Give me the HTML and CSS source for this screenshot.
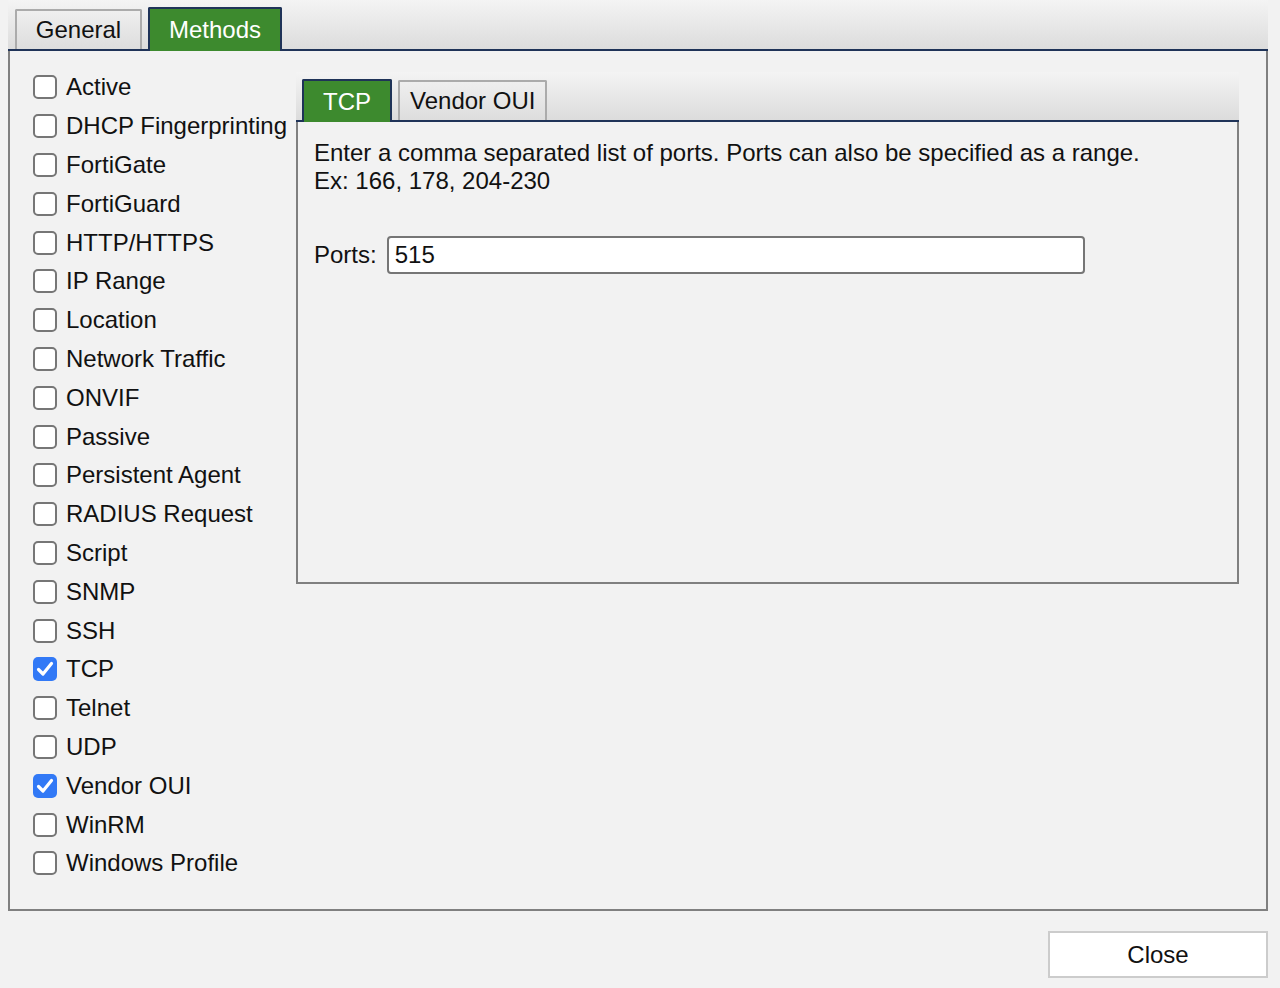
FILE: index.html
```html
<!DOCTYPE html>
<html>
<head>
<meta charset="utf-8">
<link rel="stylesheet" href="styles.css">
</head>
<body>
<div class="dialog">
  <div class="tabbar">
    <div class="tab">General</div>
    <div class="tab active">Methods</div>
  </div>
  <div class="panel">
    <div class="methods">
      <label class="row"><span class="cb"></span>Active</label>
      <label class="row"><span class="cb"></span>DHCP Fingerprinting</label>
      <label class="row"><span class="cb"></span>FortiGate</label>
      <label class="row"><span class="cb"></span>FortiGuard</label>
      <label class="row"><span class="cb"></span>HTTP/HTTPS</label>
      <label class="row"><span class="cb"></span>IP Range</label>
      <label class="row"><span class="cb"></span>Location</label>
      <label class="row"><span class="cb"></span>Network Traffic</label>
      <label class="row"><span class="cb"></span>ONVIF</label>
      <label class="row"><span class="cb"></span>Passive</label>
      <label class="row"><span class="cb"></span>Persistent Agent</label>
      <label class="row"><span class="cb"></span>RADIUS Request</label>
      <label class="row"><span class="cb"></span>Script</label>
      <label class="row"><span class="cb"></span>SNMP</label>
      <label class="row"><span class="cb"></span>SSH</label>
      <label class="row"><span class="cb checked"><svg viewBox="0 0 24 24" width="24" height="24"><path d="M5.5 12.5 L10 17 L18.5 6.5" fill="none" stroke="#fff" stroke-width="3.2" stroke-linecap="round" stroke-linejoin="round"/></svg></span>TCP</label>
      <label class="row"><span class="cb"></span>Telnet</label>
      <label class="row"><span class="cb"></span>UDP</label>
      <label class="row"><span class="cb checked"><svg viewBox="0 0 24 24" width="24" height="24"><path d="M5.5 12.5 L10 17 L18.5 6.5" fill="none" stroke="#fff" stroke-width="3.2" stroke-linecap="round" stroke-linejoin="round"/></svg></span>Vendor OUI</label>
      <label class="row"><span class="cb"></span>WinRM</label>
      <label class="row"><span class="cb"></span>Windows Profile</label>
    </div>
    <div class="detail">
      <div class="tabbar inner">
        <div class="tab active">TCP</div>
        <div class="tab">Vendor OUI</div>
      </div>
      <div class="subpanel">
        <p class="hint">Enter a comma separated list of ports. Ports can also be specified as a range.<br>Ex: 166, 178, 204-230</p>
        <div class="field">
          <span class="label">Ports:</span>
          <div class="input">515</div>
        </div>
      </div>
    </div>
  </div>
  <div class="footer">
    <div class="button">Close</div>
  </div>
</div>
</body>
</html>
```
FILE: styles.css
```css
html, body {
  margin: 0;
  padding: 0;
  background: #f2f2f2;
}
body {
  font-family: "Liberation Sans", Arial, sans-serif;
  font-size: 24px;
  color: #111;
}
.dialog {
  width: 1260px;
  margin-left: 8px;
}
.tabbar {
  display: flex;
  align-items: flex-end;
  gap: 6px;
  height: 49px;
  padding-left: 7px;
  background: linear-gradient(#f4f4f4, #dcdcdc);
  border-bottom: 2px solid #1f3358;
  box-sizing: content-box;
}
.tab {
  height: 38px;
  padding: 0 20px;
  display: flex;
  align-items: center;
  justify-content: center;
  border: 2px solid #ababab;
  border-bottom: none;
  border-radius: 2px 2px 0 0;
  background: linear-gradient(#efefef, #dddddd);
  color: #111;
}
.tab.active {
  height: 42px;
  background: #3d8a2e;
  border-color: #1f3358;
  color: #fff;
  margin-bottom: -2px;
}
.tabbar > .tab:first-child:not(.active) {
  width: 123px;
  padding-left: 0;
  padding-right: 0;
}
.tabbar > .tab.active:nth-child(2) {
  width: 130px;
  padding-left: 0;
  padding-right: 0;
}
.panel {
  height: 858px;
  border: 2px solid #808080;
  border-top: none;
  display: flex;
  background: #f2f2f2;
}
.methods {
  width: 286px;
  flex: none;
  padding: 17px 0 0 23px;
  box-sizing: border-box;
  display: flex;
  flex-direction: column;
}
.row {
  height: 38.8px;
  flex: none;
  display: flex;
  align-items: center;
  white-space: nowrap;
  color: #111;
}
.cb {
  width: 24px;
  height: 24px;
  box-sizing: border-box;
  border: 2px solid #767676;
  border-radius: 5px;
  background: #fff;
  margin-right: 9px;
  flex: none;
  display: flex;
}
.cb.checked {
  border: none;
  background: #3279f6;
}
.detail {
  width: 943px;
  flex: none;
  padding-top: 21px;
}
.tabbar.inner {
  height: 48px;
  padding-left: 6px;
}
.tabbar.inner .tab {
  height: 38px;
  padding: 0 10px;
}
.tabbar.inner .tab.active {
  height: 41px;
  width: 86px;
  padding: 0;
}
.subpanel {
  height: 462px;
  box-sizing: border-box;
  border: 2px solid #808080;
  border-top: none;
  padding: 17px 16px 0;
}
.hint {
  margin: 0;
  line-height: 28px;
}
.field {
  display: flex;
  align-items: center;
  gap: 10px;
  margin-top: 41px;
}
.input {
  width: 698px;
  height: 38px;
  box-sizing: border-box;
  border: 2px solid #767676;
  border-radius: 4px;
  background: #fff;
  padding-left: 6px;
  display: flex;
  align-items: center;
}
.footer {
  display: flex;
  justify-content: flex-end;
  margin-top: 20px;
}
.button {
  width: 220px;
  height: 47px;
  box-sizing: border-box;
  border: 2px solid #cccccc;
  background: #fff;
  display: flex;
  align-items: center;
  justify-content: center;
  color: #111;
}
```
